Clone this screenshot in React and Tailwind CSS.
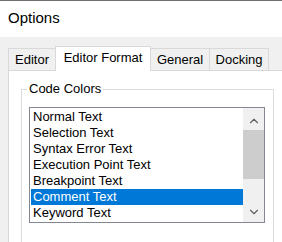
import { ChevronUp, ChevronDown } from "lucide-react";

const items = [
  "Normal Text",
  "Selection Text",
  "Syntax Error Text",
  "Execution Point Text",
  "Breakpoint Text",
  "Comment Text",
  "Keyword Text",
];

export default function App() {
  const selected = "Comment Text";

  return (
    <div
      className="w-[282px] h-[242px] overflow-hidden bg-[#f0f0f0] text-black flex flex-col"
      style={{ fontFamily: '"Liberation Sans", Arial, sans-serif' }}
    >
      {/* title */}
      <div className="h-[37px] shrink-0 bg-white border-t border-[#707070] flex items-center pl-[8px] pb-[2px] text-[15px]">
        Options
      </div>

      {/* tabs */}
      <div className="flex items-end mt-[9px] ml-[8px] text-[13px] leading-[16px]">
        <div className="w-[48px] h-[22px] border border-b-0 border-[#d9d9d9] flex items-center justify-center pt-[1px]">
          Editor
        </div>
        <div className="relative z-10 -ml-px -mb-px w-[96px] h-[25px] bg-white border border-b-0 border-[#d9d9d9] flex items-start justify-center pt-[3px]">
          Editor Format
        </div>
        <div className="-ml-px w-[60px] h-[22px] border border-b-0 border-[#d9d9d9] flex items-center justify-center pt-[1px]">
          General
        </div>
        <div className="-ml-px w-[60px] h-[22px] border border-b-0 border-[#d9d9d9] flex items-center justify-center pt-[1px]">
          Docking
        </div>
      </div>

      {/* panel */}
      <div className="flex-1 ml-[8px] bg-white border-t border-l border-[#d9d9d9] text-[13px]">
        <div className="relative ml-[12px] mt-[18px] w-[253px] h-[200px] border border-[#dcdcdc]">
          <span className="absolute -top-[9px] left-[5px] px-[2px] bg-white leading-[16px]">
            Code Colors
          </span>

          <div className="ml-[7px] mt-[17px] w-[236px] h-[116px] border border-[#828790] flex">
            <div className="flex-1 pl-[1px] pt-[1px]">
              {items.map((item) => (
                <div
                  key={item}
                  className={
                    item === selected
                      ? "h-[16px] leading-[16px] pl-[2px] bg-[#0078d7] text-white"
                      : "h-[16px] leading-[16px] pl-[2px]"
                  }
                >
                  {item}
                </div>
              ))}
            </div>

            <div className="w-[21px] bg-[#f0f0f0] flex flex-col">
              <div className="h-[22px] flex items-center justify-center pt-[3px] text-[#606060]">
                <ChevronUp size={14} strokeWidth={2} />
              </div>
              <div className="h-[49px] bg-[#cdcdcd]" />
              <div className="flex-1" />
              <div className="h-[21px] flex items-center justify-center text-[#606060]">
                <ChevronDown size={14} strokeWidth={2} />
              </div>
            </div>
          </div>
        </div>
      </div>
    </div>
  );
}
